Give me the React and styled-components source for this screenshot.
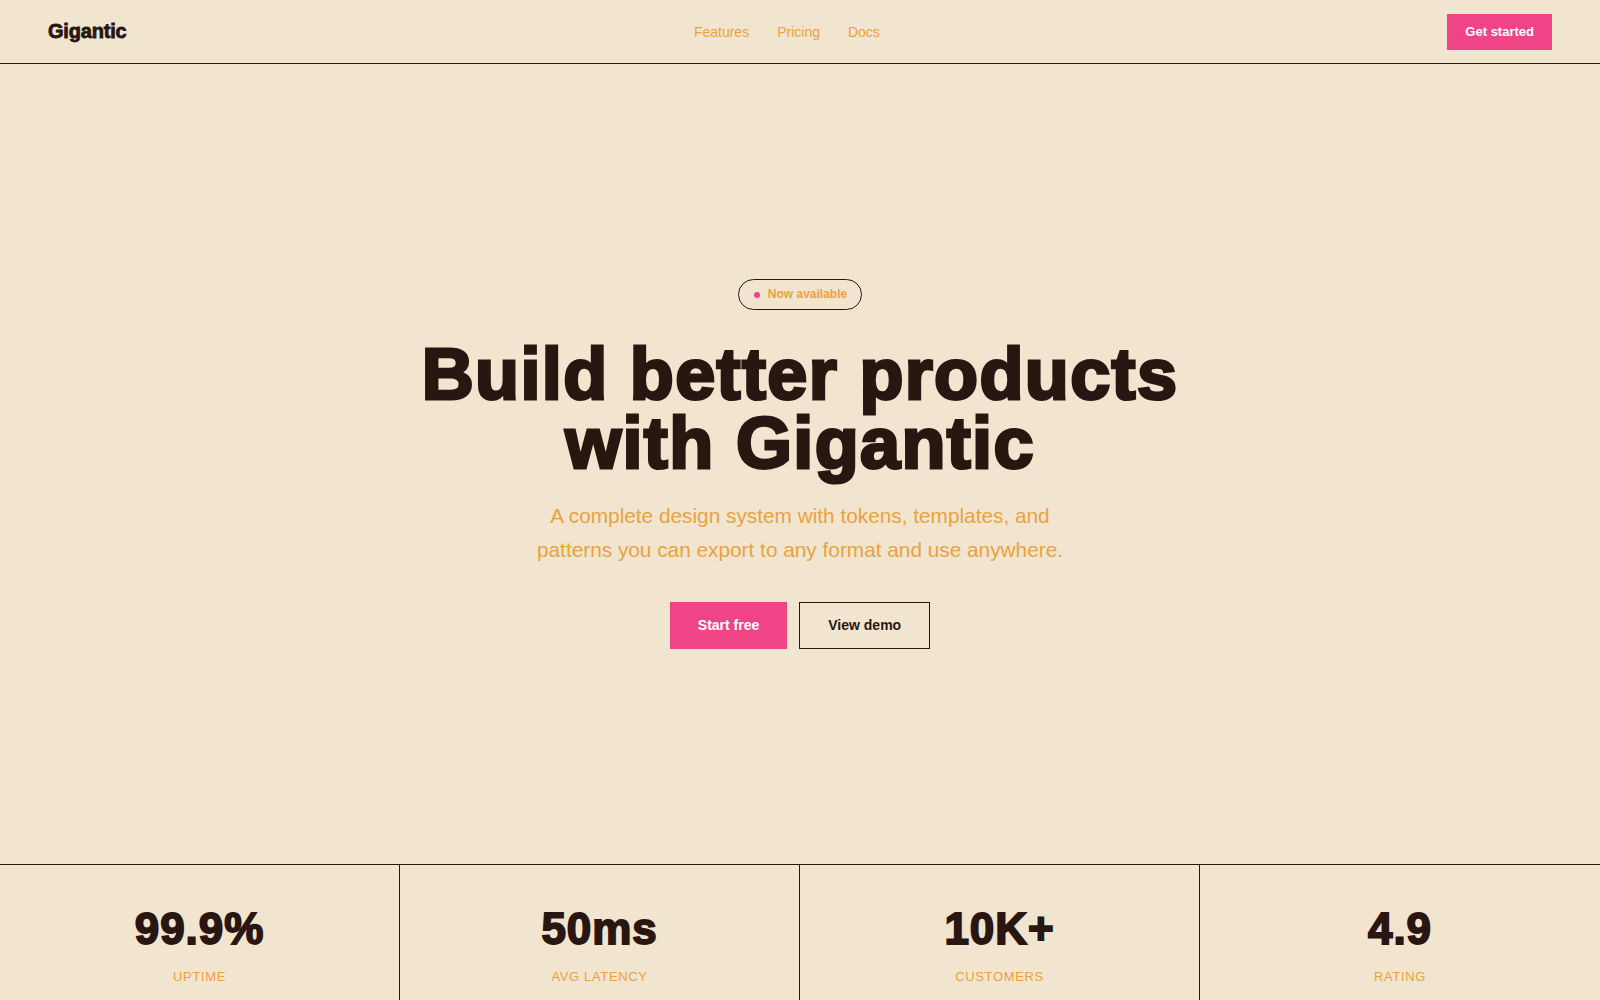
import React from "react";
import styled, { createGlobalStyle } from "styled-components";

const C = {
  bg: "#F1E5CF",
  ink: "#2A1611",
  orange: "#EBA23E",
  pink: "#EF4587",
};

const Global = createGlobalStyle`
  * { box-sizing: border-box; }
  html, body { margin: 0; padding: 0; background: ${C.bg}; }
  body { font-family: "Liberation Sans", Arial, sans-serif; color: ${C.ink}; }
`;

const Page = styled.div`
  min-height: 100vh;
  background: ${C.bg};
  display: flex;
  flex-direction: column;
`;

const Header = styled.header`
  height: 64px;
  padding: 0 48px;
  display: flex;
  align-items: center;
  justify-content: space-between;
  border-bottom: 1px solid ${C.ink};
`;

const Logo = styled.div`
  font-size: 20px;
  font-weight: 700;
  letter-spacing: calc(-0.05em + 0.8px);
  -webkit-text-stroke: 0.8px ${C.ink};
  color: ${C.ink};
`;

const Nav = styled.nav`
  display: flex;
  gap: 28px;
`;

const NavLink = styled.a`
  font-size: 14px;
  color: ${C.orange};
  text-decoration: none;
`;

const Button = styled.button`
  font-family: inherit;
  font-weight: 700;
  font-size: ${(p) => (p.$small ? "13px" : "14px")};
  line-height: ${(p) => (p.$small ? "16px" : "17px")};
  padding: ${(p) =>
    p.$small ? "10px 18px" : p.$outline ? "14px 28px" : "15px 28px"};
  border: ${(p) => (p.$outline ? `1px solid ${C.ink}` : "none")};
  background: ${(p) => (p.$outline ? "transparent" : C.pink)};
  color: ${(p) => (p.$outline ? C.ink : "#fff")};
  border-radius: 0;
  cursor: pointer;
`;

const Hero = styled.section`
  height: 800px;
  display: flex;
  flex-direction: column;
  align-items: center;
  justify-content: center;
  text-align: center;
`;

const Badge = styled.div`
  display: inline-flex;
  align-items: center;
  gap: 8px;
  padding: 7px 14px 7px 15px;
  border: 1px solid ${C.ink};
  border-radius: 999px;
  font-size: 12px;
  line-height: 15px;
  font-weight: 700;
  color: ${C.orange};
  margin-bottom: 30px;
`;

const Dot = styled.span`
  width: 6px;
  height: 6px;
  border-radius: 50%;
  background: ${C.pink};
`;

const Title = styled.h1`
  margin: 0 0 22px;
  font-size: 72px;
  line-height: 0.95;
  font-weight: 700;
  letter-spacing: calc(-0.02em + 2.8px);
  -webkit-text-stroke: 3px ${C.ink};
  color: ${C.ink};
`;

const Sub = styled.p`
  margin: 0 0 35px;
  max-width: 560px;
  font-size: 20.8px;
  line-height: 1.62;
  color: ${C.orange};
`;

const Actions = styled.div`
  display: flex;
  gap: 12px;
`;

const Stats = styled.section`
  display: grid;
  grid-template-columns: repeat(4, 1fr);
  border-top: 1px solid ${C.ink};
`;

const Stat = styled.div`
  padding: 42px 0 40px;
  text-align: center;
  border-right: 1px solid ${C.ink};
  &:last-child { border-right: none; }
`;

const StatValue = styled.div`
  font-size: 44px;
  line-height: 1;
  font-weight: 700;
  letter-spacing: calc(-0.02em + 1.8px);
  -webkit-text-stroke: 1.8px ${C.ink};
  color: ${C.ink};
`;

const StatLabel = styled.div`
  margin-top: 18px;
  font-size: 13px;
  line-height: 1.2;
  letter-spacing: 0.05em;
  text-transform: uppercase;
  color: ${C.orange};
`;

const stats = [
  ["99.9%", "Uptime"],
  ["50ms", "Avg latency"],
  ["10K+", "Customers"],
  ["4.9", "Rating"],
];

export default function App() {
  return (
    <Page>
      <Global />
      <Header>
        <Logo>Gigantic</Logo>
        <Nav>
          <NavLink href="#">Features</NavLink>
          <NavLink href="#">Pricing</NavLink>
          <NavLink href="#">Docs</NavLink>
        </Nav>
        <Button $small>Get started</Button>
      </Header>
      <Hero>
        <Badge>
          <Dot />
          Now available
        </Badge>
        <Title>
          Build better products
          <br />
          with Gigantic
        </Title>
        <Sub>
          A complete design system with tokens, templates, and patterns you can
          export to any format and use anywhere.
        </Sub>
        <Actions>
          <Button>Start free</Button>
          <Button $outline>View demo</Button>
        </Actions>
      </Hero>
      <Stats>
        {stats.map(([v, l]) => (
          <Stat key={l}>
            <StatValue>{v}</StatValue>
            <StatLabel>{l}</StatLabel>
          </Stat>
        ))}
      </Stats>
    </Page>
  );
}
